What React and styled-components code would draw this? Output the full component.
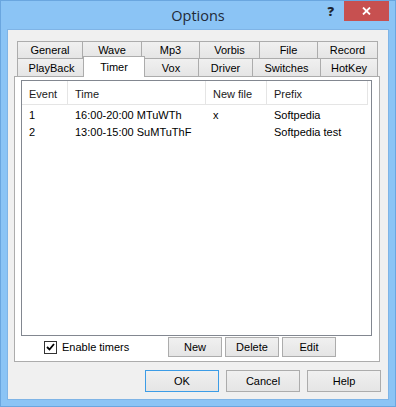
import styled, { createGlobalStyle, css } from "styled-components";

const GlobalStyle = createGlobalStyle`
  html, body {
    margin: 0;
    padding: 0;
    background: #ffffff;
  }
  body {
    font-family: "Liberation Sans", Arial, sans-serif;
    font-size: 11px;
    color: #000;
  }
`;

const Window = styled.div`
  width: 396px;
  height: 407px;
  box-sizing: border-box;
  background: #8bc4f5;
  border: 1px solid #6aa6df;
  display: flex;
  flex-direction: column;
  overflow: hidden;
`;

const TitleBar = styled.div`
  height: 29px;
  display: grid;
  grid-template-columns: 1fr auto 1fr;
  align-items: start;
`;

const Title = styled.div`
  grid-column: 2;
  font-family: "Open Sans", "Noto Sans", sans-serif;
  font-size: 14.5px;
  color: #1f2a38;
  line-height: 29px;
`;

const Controls = styled.div`
  grid-column: 3;
  justify-self: end;
  display: flex;
  align-items: flex-start;
  margin-right: 6px;
`;

const HelpMark = styled.span`
  font-family: "Open Sans", "Noto Sans", sans-serif;
  font-weight: 800;
  font-size: 13px;
  color: #1e2530;
  line-height: 20px;
  margin-right: 10px;
`;

const CloseButton = styled.div`
  width: 45px;
  height: 20px;
  background: #c75050;
  display: flex;
  align-items: center;
  justify-content: center;
`;

const Client = styled.div`
  flex: 1;
  margin: 0 7px 7px 7px;
  background: #f0f0f0;
  box-shadow: 0 0 0 1px #7fb4e6;
  padding: 11px 8px 7px 6px;
  display: flex;
  flex-direction: column;
`;

const TabRow = styled.div`
  display: flex;
  align-items: flex-start;
  padding-left: 3px;
  height: ${(p) => p.$h}px;
`;

const Tab = styled.div`
  box-sizing: border-box;
  width: ${(p) => p.$w}px;
  height: ${(p) => p.$h}px;
  border-top: 1px solid #acacac;
  border-left: 1px solid #acacac;
  ${(p) => p.$last && css`border-right: 1px solid #acacac;`}
  background: linear-gradient(#f0f0f0, #e5e5e5);
  display: flex;
  align-items: center;
  justify-content: center;
  white-space: nowrap;
  ${(p) =>
    p.$active &&
    css`
      position: relative;
      z-index: 2;
      background: #ffffff;
      border-right: 1px solid #acacac;
      width: ${p.$w + 4}px;
      height: ${p.$h + 3}px;
      margin: -2px -2px -1px -2px;
      padding-bottom: 1px;
    `}
`;

const Panel = styled.div`
  position: relative;
  z-index: 1;
  box-sizing: border-box;
  height: 286px;
  background: #ffffff;
  border: 1px solid #acacac;
  padding: 3px 7px 4px 6px;
  display: flex;
  flex-direction: column;
`;

const List = styled.div`
  box-sizing: border-box;
  width: 351px;
  height: 256px;
  border: 1px solid #828790;
  background: #fff;
`;

const HeaderRow = styled.div`
  display: flex;
  height: 23px;
  border-bottom: 1px solid #e5e5e5;
  margin-right: 3px;
`;

const HeaderCell = styled.div`
  box-sizing: border-box;
  width: ${(p) => p.$w}px;
  padding: 2px 0 0 7px;
  display: flex;
  align-items: center;
  border-right: 1px solid #e5e5e5;
  color: #1a1a1a;
`;

const Rows = styled.div`
  padding-top: 1px;
`;

const Row = styled.div`
  display: flex;
  height: 17px;
  align-items: center;
`;

const Cell = styled.div`
  box-sizing: border-box;
  width: ${(p) => p.$w}px;
  padding-left: 7px;
  white-space: nowrap;
`;

const ControlRow = styled.div`
  display: flex;
  align-items: flex-start;
  margin-top: 1px;
`;

const CheckLabel = styled.label`
  width: 147px;
  box-sizing: border-box;
  padding-left: 23px;
  display: flex;
  align-items: center;
  height: 20px;
  gap: 5px;
`;

const Box = styled.span`
  width: 13px;
  height: 13px;
  box-sizing: border-box;
  border: 1px solid #333;
  background: #fff;
  display: flex;
  align-items: center;
  justify-content: center;
`;

const ButtonGroup = styled.div`
  display: flex;
  gap: 3px;
`;

const Button = styled.button`
  box-sizing: border-box;
  width: ${(p) => p.$w}px;
  height: ${(p) => p.$h}px;
  font-family: "Liberation Sans", Arial, sans-serif;
  font-size: 11px;
  color: #000;
  background: linear-gradient(#f0f0f0, #e5e5e5);
  border: 1px solid ${(p) => (p.$default ? "#3c9ce6" : "#acacac")};
  padding: 0;
  border-radius: 0;
`;

const Footer = styled.div`
  display: flex;
  justify-content: flex-end;
  gap: 7px;
  margin-top: 8px;
  margin-right: -1px;
`;

const topTabs = [
  ["General", 65],
  ["Wave", 59],
  ["Mp3", 58],
  ["Vorbis", 60],
  ["File", 58],
  ["Record", 61],
];

const bottomTabs = [
  ["PlayBack", 68],
  ["Timer", 58],
  ["Vox", 55],
  ["Driver", 54],
  ["Switches", 68],
  ["HotKey", 58],
];

const columns = [
  ["Event", 46],
  ["Time", 138],
  ["New file", 61],
  ["Prefix", 101],
];

const timers = [
  ["1", "16:00-20:00 MTuWTh", "x", "Softpedia"],
  ["2", "13:00-15:00 SuMTuThF", "", "Softpedia test"],
];

const App = () => {
  return (
    <>
      <GlobalStyle />
      <Window>
        <TitleBar>
          <Title>Options</Title>
          <Controls>
            <HelpMark>?</HelpMark>
            <CloseButton>
              <svg width="9" height="8" viewBox="0 0 9 8">
                <path d="M1 0.5 L8 7.5 M8 0.5 L1 7.5" stroke="#fff" strokeWidth="1.8" />
              </svg>
            </CloseButton>
          </Controls>
        </TitleBar>
        <Client>
          <TabRow $h={17}>
            {topTabs.map(([name, w], i) => (
              <Tab key={name} $w={w} $h={17} $last={i === topTabs.length - 1}>
                {name}
              </Tab>
            ))}
          </TabRow>
          <TabRow $h={18}>
            {bottomTabs.map(([name, w], i) => (
              <Tab
                key={name}
                $w={w}
                $h={18}
                $last={i === bottomTabs.length - 1}
                $active={name === "Timer"}
              >
                {name}
              </Tab>
            ))}
          </TabRow>
          <Panel>
            <List>
              <HeaderRow>
                {columns.map(([name, w]) => (
                  <HeaderCell key={name} $w={w}>
                    {name}
                  </HeaderCell>
                ))}
              </HeaderRow>
              <Rows>
                {timers.map((row) => (
                  <Row key={row[0]}>
                    {row.map((v, i) => (
                      <Cell key={i} $w={columns[i][1]}>
                        {v}
                      </Cell>
                    ))}
                  </Row>
                ))}
              </Rows>
            </List>
            <ControlRow>
              <CheckLabel>
                <Box>
                  <svg width="9" height="8" viewBox="0 0 9 8">
                    <path d="M1 4 L3.5 6.5 L8 1" stroke="#000" strokeWidth="1.8" fill="none" />
                  </svg>
                </Box>
                Enable timers
              </CheckLabel>
              <ButtonGroup>
                <Button $w={54} $h={20}>New</Button>
                <Button $w={54} $h={20}>Delete</Button>
                <Button $w={54} $h={20}>Edit</Button>
              </ButtonGroup>
            </ControlRow>
          </Panel>
          <Footer>
            <Button $w={74} $h={22} $default>OK</Button>
            <Button $w={74} $h={22}>Cancel</Button>
            <Button $w={74} $h={22}>Help</Button>
          </Footer>
        </Client>
      </Window>
    </>
  );
};

export default App;
